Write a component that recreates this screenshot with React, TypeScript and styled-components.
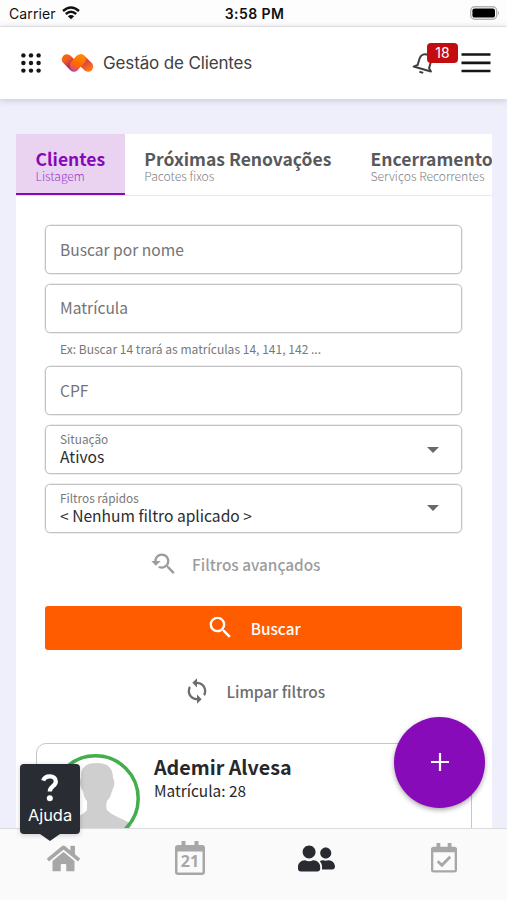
import React from "react";
import styled, { createGlobalStyle } from "styled-components";
import { MdSearch, MdYoutubeSearchedFor, MdLoop } from "react-icons/md";
import { FaHome, FaUserFriends } from "react-icons/fa";

const sourceStack = `"Noto Sans CJK SC", "Noto Sans", sans-serif`;
const systemStack = `Inter, Roboto, sans-serif`;

const GlobalStyle = createGlobalStyle`
  * { box-sizing: border-box; }
  body { margin: 0; background: #efeffb; font-family: ${sourceStack}; color: #27282b; }
`;

const Screen = styled.div`
  width: 507px;
  height: 900px;
  display: flex;
  flex-direction: column;
  position: relative;
  overflow: hidden;
  background: #efeffb;
`;

const StatusBar = styled.div`
  flex: none;
  height: 27px;
  display: grid;
  grid-template-columns: 1fr auto 1fr;
  align-items: center;
  padding: 0 7px 0 9px;
  background: #fdfdfd;
  border-bottom: 1px solid #ebebed;
  font-family: ${systemStack};
  color: #111;
`;

const Carrier = styled.div`
  display: flex;
  align-items: center;
  gap: 6px;
  font-size: 14px;
  letter-spacing: 0.1px;
`;

const Clock = styled.div`
  font-size: 14px;
  font-weight: 600;
  letter-spacing: 0.4px;
`;

const BatterySlot = styled.div`
  display: flex;
  justify-content: flex-end;
`;

const Header = styled.header`
  flex: none;
  height: 72px;
  display: flex;
  align-items: center;
  padding: 0 16px 0 21px;
  background: #fff;
  box-shadow: 0 1px 7px rgba(40, 40, 70, 0.22);
  z-index: 1;
`;

const Title = styled.h1`
  margin: 0 auto 0 9px;
  font: 400 17px/24px ${systemStack};
  letter-spacing: -0.14px;
  color: #404144;
`;

const LogoSvg = styled.svg`
  margin-left: 20px;
`;

const BellButton = styled.div`
  position: relative;
  width: 24px;
  height: 24px;
  margin-right: 25px;
`;

const Badge = styled.span`
  position: absolute;
  left: 15px;
  top: -8px;
  width: 31px;
  height: 20px;
  border-radius: 4px;
  background: #c30c10;
  color: #fff;
  font: 400 14px/20px ${systemStack};
  text-align: center;
`;

const Page = styled.main`
  flex: 1;
  min-height: 0;
  margin: 35px 15px 0 16px;
  background: #fff;
  overflow: hidden;
`;

const Tabs = styled.nav`
  display: flex;
  height: 62px;
  overflow: hidden;
  border-bottom: 1px solid #e8e8ea;
`;

const Tab = styled.div<{ $active?: boolean }>`
  flex: none;
  height: 62px;
  padding: 16px 19.6px 0;
  color: ${(p) => (p.$active ? "#8609b9" : "#58595c")};
  background: ${(p) => (p.$active ? "#ead2f1" : "transparent")};
  box-shadow: ${(p) => (p.$active ? "inset 0 -3px #8609b9" : "none")};
`;

const TabTitle = styled.div`
  font-size: 17.5px;
  font-weight: 700;
  line-height: 18px;
  white-space: nowrap;
`;

const TabCaption = styled.div<{ $active?: boolean }>`
  font-size: 12.15px;
  font-weight: 300;
  line-height: 15px;
  white-space: nowrap;
  color: ${(p) => (p.$active ? "#9a3cc8" : "#7f8083")};
`;

const Form = styled.form`
  display: flex;
  flex-direction: column;
  padding: 29px 30px 0 29px;
`;

const Field = styled.label`
  height: 49px;
  margin-bottom: 9.7px;
  padding: 0 22px 0 14px;
  display: flex;
  align-items: center;
  justify-content: space-between;
  border: 1px solid #c3c3c5;
  border-radius: 5px;
  box-shadow: 0 0 0 0.5px #dededf;
`;

const Placeholder = styled.span`
  padding-bottom: 2px;
  font-size: 15.6px;
  line-height: 20px;
  color: #737476;
`;

const Hint = styled.div`
  margin: -4px 0 6px 15px;
  font-size: 12.05px;
  line-height: 22px;
  color: #77787a;
`;

const SelectText = styled.div`
  display: flex;
  flex-direction: column;
  padding-bottom: 2px;
`;

const SelectLabel = styled.span`
  font-size: 11.8px;
  line-height: 15px;
  color: #77787a;
`;

const SelectValue = styled.span`
  font-size: 15.6px;
  line-height: 20px;
  color: #2b2c2e;
`;

const Caret = styled.span`
  border: 6px solid transparent;
  border-top-color: #68696b;
  border-bottom: 0;
`;

const Action = styled.button<{ $kind: "muted" | "primary" | "plain" }>`
  height: 44px;
  padding: ${(p) => (p.$kind === "muted" ? "0 38px 0 0" : p.$kind === "primary" ? "0" : "0 0 0 1px")};
  margin: ${(p) => (p.$kind === "muted" ? "0 0 19.3px" : p.$kind === "primary" ? "0 0 19px" : "0 0 1px")};
  display: flex;
  align-items: center;
  justify-content: center;
  gap: 15.5px;
  border: 0;
  border-radius: 3px;
  background: ${(p) => (p.$kind === "primary" ? "#ff5c00" : "transparent")};
  color: ${(p) => (p.$kind === "primary" ? "#fff" : p.$kind === "muted" ? "#9c9c9e" : "#6c6d70")};
  font: 500 15.35px/20px ${sourceStack};
`;

const ClientCard = styled.article`
  margin: 29px 20px 0;
  height: 150px;
  display: flex;
  border: 1px solid #c6c6c8;
  border-radius: 10px;
`;

const Avatar = styled.svg`
  margin: 10px 0 0 14px;
`;

const ClientInfo = styled.div`
  margin: 9px 0 0 14px;
`;

const ClientName = styled.h2`
  margin: 0;
  font-size: 19.7px;
  font-weight: 700;
  line-height: 28px;
`;

const ClientCode = styled.div`
  font-size: 15.4px;
  line-height: 18px;
  color: #27282b;
`;

const BottomNav = styled.nav`
  flex: none;
  height: 72px;
  display: grid;
  grid-template-columns: repeat(4, 1fr);
  justify-items: center;
  align-items: start;
  padding-top: 11px;
  background: #fafafa;
  border-top: 1px solid #dcdcdf;
`;

const NavItem = styled.div<{ $active?: boolean }>`
  height: 36px;
  display: flex;
  align-items: center;
  color: ${(p) => (p.$active ? "#292b30" : "#a7a7a8")};
`;

const Fab = styled.button`
  position: absolute;
  left: 394px;
  top: 716.5px;
  width: 91px;
  height: 91px;
  padding: 0;
  display: grid;
  place-items: center;
  border: 0;
  border-radius: 50%;
  background: #870bb9;
  box-shadow: 0 2px 5px rgba(0, 0, 0, 0.35);
`;

const HelpBubble = styled.div`
  position: absolute;
  left: 20px;
  top: 764px;
  width: 60px;
  height: 70px;
  border-radius: 4px;
  background: #292c32;
  color: #fff;
  display: flex;
  flex-direction: column;
  align-items: center;
  padding-top: 10px;
  box-shadow: 0 1px 5px rgba(0, 0, 0, 0.2);
  font: 400 16.4px/27px ${systemStack};
  &::after {
    content: "";
    position: absolute;
    top: 69.5px;
    left: 20px;
    border: 10px solid transparent;
    border-top: 7px solid #292c32;
    border-bottom: 0;
  }
`;

const WifiIcon = () => (
  <svg width="18" height="14" viewBox="0 0 18 14" fill="none" stroke="#111" strokeWidth="2.5">
    <path d="M1 5Q9-2 17 5M3.8 8Q9 3.6 14.2 8" />
    <path d="M9 13.3 5.8 10.2Q9 7.7 12.2 10.2Z" fill="#111" stroke="none" />
  </svg>
);

const BatteryIcon = () => (
  <svg width="30" height="14" viewBox="0 0 30 14">
    <rect x=".7" y=".7" width="26" height="12.6" rx="4" fill="#fff" stroke="#b2b2b2" strokeWidth="1.4" />
    <rect x="2.4" y="2.4" width="22.6" height="9.2" rx="2.2" fill="#000" />
    <path d="M28 5q2 2 0 4Z" fill="#b2b2b2" />
  </svg>
);

const AppsIcon = () => (
  <svg width="20" height="20" viewBox="0 0 20 20" fill="#151515">
    {[2.4, 10, 17.6].map((y) =>
      [2.4, 10, 17.6].map((x) => <circle key={`${x}-${y}`} cx={x} cy={y} r="2.2" />)
    )}
  </svg>
);

const Logo = () => (
  <LogoSvg width="33" height="20" viewBox="0 0 33 20" fill="none" strokeLinecap="round" strokeWidth="10.4">
    <defs>
      <linearGradient id="left" x1="3" y1="2" x2="15" y2="18" gradientUnits="userSpaceOnUse">
        <stop stopColor="#ff6900" />
        <stop offset=".3" stopColor="#ef5726" />
        <stop offset=".62" stopColor="#a92e68" />
        <stop offset="1" stopColor="#c846a0" />
      </linearGradient>
      <linearGradient id="right" x1="19" y1="3" x2="29" y2="16" gradientUnits="userSpaceOnUse">
        <stop stopColor="#ff8200" />
        <stop offset=".5" stopColor="#d8454a" />
        <stop offset="1" stopColor="#ff7411" />
      </linearGradient>
      <linearGradient id="middle" x1="20" y1="3" x2="12" y2="17" gradientUnits="userSpaceOnUse">
        <stop stopColor="#ff8500" />
        <stop offset=".65" stopColor="#ff6500" />
        <stop offset="1" stopColor="#d04f90" />
      </linearGradient>
    </defs>
    <path d="M20 6.600 27 13.500" stroke="url(#right)" />
    <path d="M6 6.400 13 13.500" stroke="url(#left)" />
    <path d="M19.500 6.400 14 12.300" stroke="url(#middle)" />
  </LogoSvg>
);

const BellIcon = () => (
  <svg width="24" height="24" viewBox="0 0 24 24" fill="none" stroke="#3e3f42" strokeWidth="2">
    <g transform="rotate(16 12 12)">
      <path d="M3 18.3H21L18.3 15.5V9.2C18.3 1 6.5 1 6.5 9.2V15.5Z" strokeLinejoin="round" />
      <path d="M10 21.7H14" />
    </g>
  </svg>
);

const MenuIcon = () => (
  <svg width="30" height="22" viewBox="0 0 30 22" stroke="#151515" strokeWidth="2.7">
    <path d="M.5 2.5H29.5M.5 10.8H29.5M.5 19H29.5" />
  </svg>
);

const CalendarDayIcon = () => (
  <svg width="30" height="34" viewBox="0 0 30 34">
    <path d="M6.5 0h4v4h9V0h4v4H27q3 0 3 3v24q0 3-3 3H3q-3 0-3-3V7q0-3 3-3h3.5ZM2.5 10.5v21h25v-21Z" fill="currentColor" fillRule="evenodd" />
    <text x="15" y="26" textAnchor="middle" fontFamily="Open Sans, sans-serif" fontWeight="700" fontSize="16" fill="currentColor">21</text>
  </svg>
);

const CalendarCheckIcon = () => (
  <svg width="26" height="30" viewBox="0 0 26 30">
    <path d="M5.5 0h3.8v3.7h7.4V0h3.8v3.7h3q2.5 0 2.5 2.5V27q0 2.5-2.5 2.5h-21Q0 29.5 0 27V6.2q0-2.5 2.5-2.5h3ZM2.3 9.3v17.9h21.4V9.3Z" fill="currentColor" fillRule="evenodd" />
    <path d="m6.7 18.2 4.2 4.1 8.3-8.5" fill="none" stroke="currentColor" strokeWidth="2.8" />
  </svg>
);

const QuestionIcon = () => (
  <svg width="18" height="28" viewBox="0 0 18 28" fill="none">
    <path d="M2.2 6.7C4 1 14.800 .8 14.800 7.400c0 5-6 4.600-6 10.200" stroke="#fff" strokeWidth="4.3" />
    <circle cx="8.8" cy="24.2" r="3" fill="#fff" />
  </svg>
);

const PlusIcon = () => (
  <svg width="18" height="18" viewBox="0 0 18 18" stroke="#fff" strokeWidth="2.2">
    <path d="M9 0V18M0 9H18" />
  </svg>
);

const ClientAvatar = () => (
  <Avatar width="89" height="89" viewBox="0 0 89 89">
    <path d="M45.5 9C34 9 29.5 14 30 24c-2 3-1 10 2 13 1 6 2 8 4 10v9c-5 7-17 8-26 15a44 44 0 0 0 71 0c-9-7-20-9-25-15-1-3-1-6 0-9 3-3 4-6 5-10 3-5 3-10 1-13C62 14 57 9 45.5 9Z" fill="#cfcfd0" />
    <circle cx="44.5" cy="44.5" r="42.7" fill="none" stroke="#43ae4b" strokeWidth="3.5" />
  </Avatar>
);

const tabs = [
  { title: "Clientes", caption: "Listagem", active: true },
  { title: "Próximas Renovações", caption: "Pacotes fixos", active: false },
  { title: "Encerramento", caption: "Serviços Recorrentes", active: false },
];

const SelectField = ({ label, value }: { label: string; value: string }) => (
  <Field>
    <SelectText>
      <SelectLabel>{label}</SelectLabel>
      <SelectValue>{value}</SelectValue>
    </SelectText>
    <Caret />
  </Field>
);

export default function App() {
  return (
    <>
      <GlobalStyle />
      <Screen>
        <StatusBar>
          <Carrier>Carrier <WifiIcon /></Carrier>
          <Clock>3:58 PM</Clock>
          <BatterySlot><BatteryIcon /></BatterySlot>
        </StatusBar>
        <Header>
          <AppsIcon />
          <Logo />
          <Title>Gestão de Clientes</Title>
          <BellButton><BellIcon /><Badge>18</Badge></BellButton>
          <MenuIcon />
        </Header>
        <Page>
          <Tabs>
            {tabs.map((tab) => (
              <Tab key={tab.title} $active={tab.active}>
                <TabTitle>{tab.title}</TabTitle>
                <TabCaption $active={tab.active}>{tab.caption}</TabCaption>
              </Tab>
            ))}
          </Tabs>
          <Form>
            <Field><Placeholder>Buscar por nome</Placeholder></Field>
            <Field><Placeholder>Matrícula</Placeholder></Field>
            <Hint>Ex: Buscar 14 trará as matrículas 14, 141, 142 ...</Hint>
            <Field><Placeholder>CPF</Placeholder></Field>
            <SelectField label="Situação" value="Ativos" />
            <SelectField label="Filtros rápidos" value="< Nenhum filtro aplicado >" />
            <Action type="button" $kind="muted"><MdYoutubeSearchedFor size={28} />Filtros avançados</Action>
            <Action type="button" $kind="primary"><MdSearch size={29} />Buscar</Action>
            <Action type="button" $kind="plain"><MdLoop size={28} />Limpar filtros</Action>
          </Form>
          <ClientCard>
            <ClientAvatar />
            <ClientInfo>
              <ClientName>Ademir Alvesa</ClientName>
              <ClientCode>Matrícula: 28</ClientCode>
            </ClientInfo>
          </ClientCard>
        </Page>
        <BottomNav>
          <NavItem><FaHome size={33} /></NavItem>
          <NavItem><CalendarDayIcon /></NavItem>
          <NavItem $active><FaUserFriends size={37} /></NavItem>
          <NavItem><CalendarCheckIcon /></NavItem>
        </BottomNav>
        <Fab aria-label="Adicionar"><PlusIcon /></Fab>
        <HelpBubble><QuestionIcon />Ajuda</HelpBubble>
      </Screen>
    </>
  );
}
